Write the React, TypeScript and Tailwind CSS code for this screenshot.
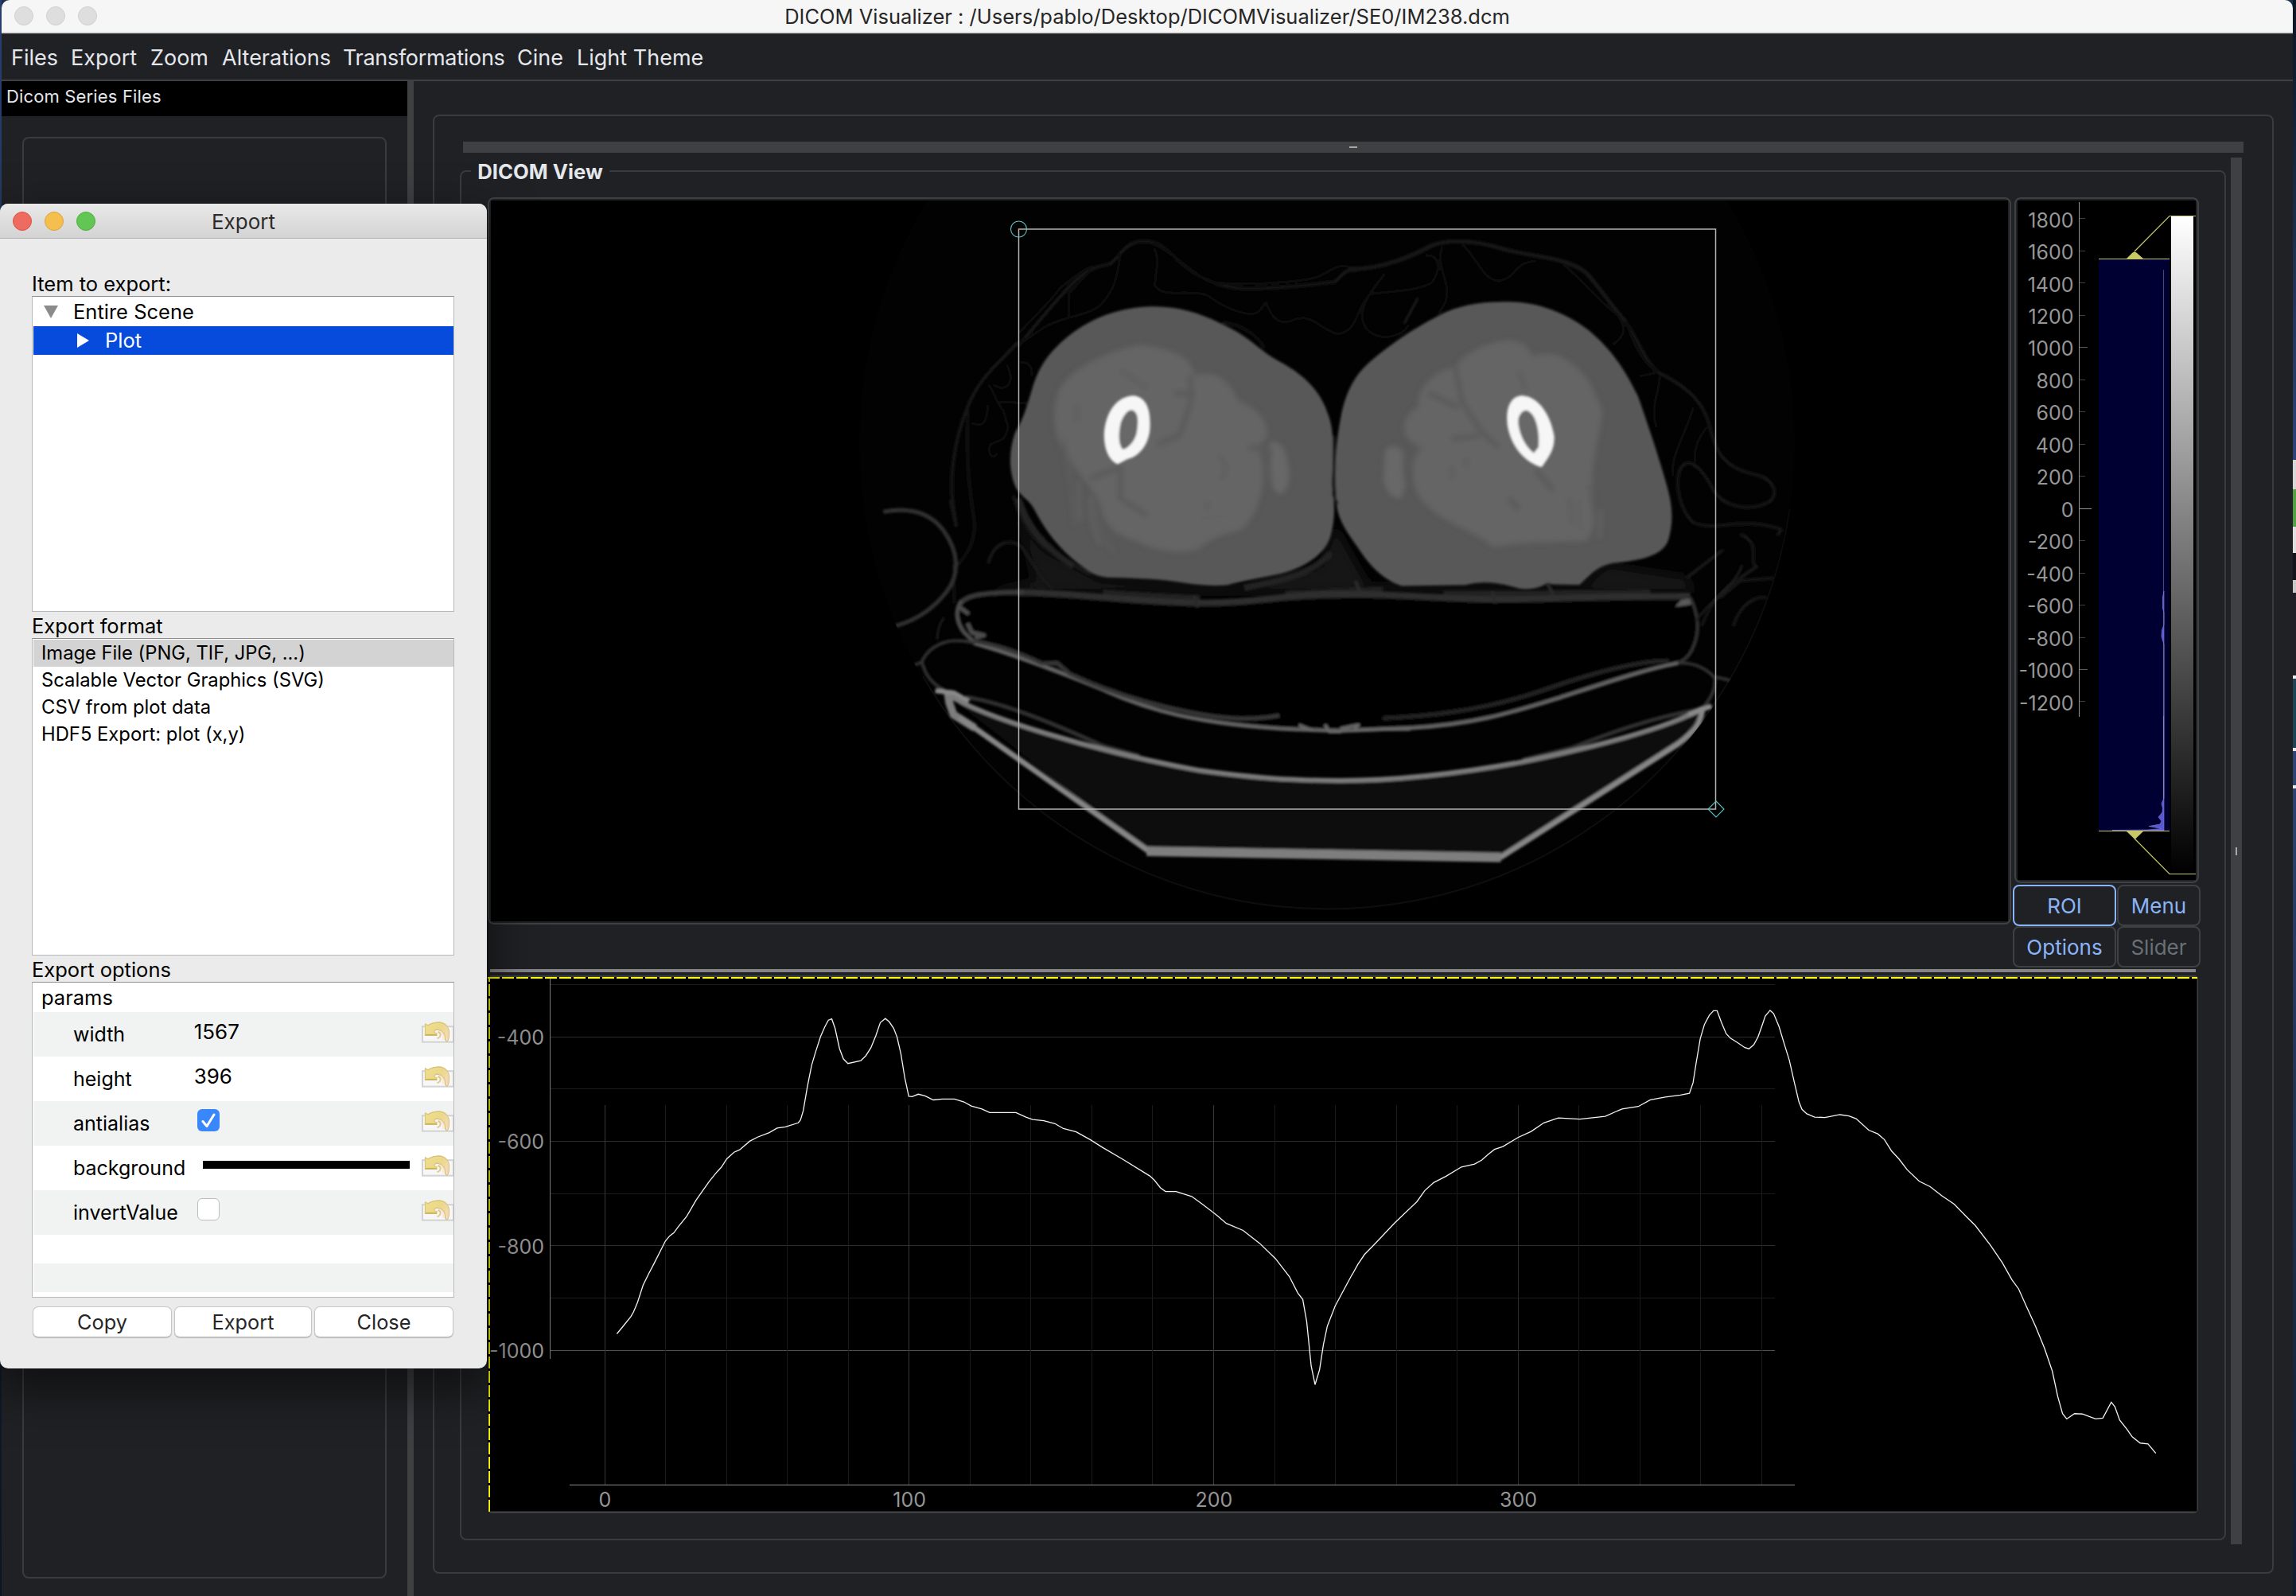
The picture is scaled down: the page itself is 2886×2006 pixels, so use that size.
import React from "react";

/* ---------- CT slice ---------- */

const LEFT_THIGH =
  "M870,435 C980,432 1060,480 1130,525 C1180,560 1200,592 1250,625 C1320,668 1375,725 1397,805 C1422,870 1415,960 1412,1060 C1420,1130 1422,1180 1408,1240 C1395,1300 1340,1350 1260,1375 C1190,1392 1140,1402 1100,1415 C1040,1420 1000,1412 940,1402 C880,1392 800,1390 740,1388 C700,1384 680,1362 655,1340 C600,1290 560,1230 530,1165 C510,1110 485,1110 467,1070 C445,1010 448,940 465,880 C490,830 500,790 515,730 C530,670 550,620 595,570 C665,490 760,438 870,435Z";
const RIGHT_THIGH =
  "M600,418 C700,415 790,465 850,520 C930,600 965,680 995,750 C1025,850 1065,990 1085,1080 C1100,1150 1100,1200 1085,1260 C1065,1315 1000,1328 920,1338 C870,1350 850,1385 820,1415 L720,1412 Q670,1442 620,1420 Q540,1395 480,1415 L290,1418 C230,1395 190,1340 160,1285 C130,1235 100,1190 95,1130 C85,1000 95,900 110,810 C125,730 150,680 185,640 C250,570 340,500 420,455 C480,425 540,418 600,418Z";
const LEFT_MUSCLE =
  "M840,570 C900,580 1000,600 1000,680 C1060,650 1110,700 1130,765 C1190,790 1220,840 1220,890 L1190,930 C1220,1000 1210,1150 1140,1220 C1080,1240 1050,1250 1010,1290 C950,1310 870,1290 830,1260 C760,1240 730,1200 720,1130 C690,1060 640,1010 620,950 C580,900 570,800 600,720 C640,650 740,590 840,570Z";
const RIGHT_MUSCLE =
  "M600,555 C650,550 670,580 680,610 C740,580 800,620 850,700 L890,800 C880,900 860,950 860,1050 C860,1150 880,1200 840,1260 L680,1265 L560,1280 C520,1230 420,1200 370,1140 C310,1080 310,980 350,930 C280,900 280,830 340,785 C330,720 400,650 450,650 C470,600 550,560 600,555Z";

function Stroke({ d, c, w }: { d: string; c: string; w: number }) {
  return <path d={d} fill="none" stroke={c} strokeWidth={w} strokeLinejoin="round" vectorEffect="non-scaling-stroke" />;
}

function CtSlice() {
  return (
    <svg viewBox="617 252 1907 906" className="block h-[906px] w-[1907px]">
      <defs>
        <clipPath id="fov">
          <circle cx="1668" cy="557" r="588" />
        </clipPath>
        <filter id="soft" x="-5%" y="-5%" width="110%" height="110%">
          <feGaussianBlur stdDeviation="1.6" />
        </filter>
        <filter id="softer" x="-10%" y="-10%" width="120%" height="120%">
          <feGaussianBlur stdDeviation="3" />
        </filter>
        <filter id="haze" x="-10%" y="-20%" width="120%" height="140%">
          <feGaussianBlur stdDeviation="7" />
        </filter>
      </defs>
      <rect x="617" y="252" width="1907" height="906" fill="#000" />
      <g clipPath="url(#fov)">
        <circle cx="1668" cy="557" r="588" fill="#020202" />
        <path d="M1160,850 A588,588 0 0 0 2250,640" fill="none" stroke="#0e0e0e" strokeWidth="2" />

        {/* haze of cloth and tissue just above the table */}
        <g filter="url(#haze)">
          <path d="M1278,640 L1310,690 L1380,728 L1560,738 L1660,712 L1678,660 L1720,735 L1990,738 L2020,710 L2120,725 L2130,745 L1230,745 L1300,730 Z" fill="#171717" />
        </g>

        <g filter="url(#soft)">
          {/* blanket contours, left half */}
          <g transform="translate(1080 230) scale(.42092 .35714)">
            <Stroke c="#131313" w={4} d="M475,575 C540,480 590,410 640,350 C690,295 720,292 750,285 C790,240 800,205 850,205 C900,205 920,240 960,280 C1010,330 1060,365 1150,372 C1250,372 1340,360 1420,348 L1455,310 L1490,305" />
            <Stroke c="#101010" w={3} d="M475,530 C530,460 570,420 600,370 C650,320 680,300 700,292 M880,215 C930,240 980,300 1040,345 C1120,365 1320,350 1370,330 C1410,310 1420,290 1450,292 L1490,302 L1568,292" />
            <Stroke c="#0e0e0e" w={3} d="M780,250 C770,340 760,380 720,430 C680,470 600,470 550,510 L475,570 M690,310 L625,390 L627,465 M880,230 C900,270 885,300 883,360 C910,410 980,370 1040,395 C1090,440 1170,480 1195,450 L1215,420 C1230,470 1250,500 1290,485 C1350,450 1380,520 1430,532 C1490,520 1480,450 1520,400 L1568,320" />
            <Stroke c="#171717" w={4} d="M475,560 C400,650 350,700 320,800 C280,920 270,1050 280,1130 L290,1210" />
            <Stroke c="#121212" w={3} d="M325,800 C318,1000 330,1080 345,1200 C345,1280 310,1320 295,1345 M283,1340 L283,1480 M1085,490 C1150,500 1190,540 1210,580" />
            <Stroke c="#101010" w={3} d="M385,780 C380,850 370,860 335,845 M385,710 C410,740 400,760 430,800 L445,860 C430,920 420,900 392,920 C380,950 400,980 412,950 M415,770 L500,775 M440,640 C470,700 440,740 400,710 M480,630 Q520,630 515,680" />
            <Stroke c="#303030" w={5} d="M72,1157 C150,1140 210,1160 250,1220 C300,1300 300,1380 260,1440 C220,1500 170,1540 105,1560" />
            <Stroke c="#161616" w={4} d="M272,1115 L290,1210 M385,1340 C400,1270 440,1250 480,1275 C520,1330 540,1400 580,1430 M460,1100 C480,1180 520,1270 580,1300 L690,1380" />
            <Stroke c="#202020" w={8} d="M475,1110 C500,1200 540,1270 640,1350 M1150,1425 C1260,1400 1350,1380 1410,1300" />
          </g>
          {/* blanket contours, right half */}
          <g transform="translate(1640 230) scale(.42092 .35714)">
            <Stroke c="#161616" w={5} d="M130,305 C250,300 330,250 380,220 C440,195 520,205 600,235 C680,260 780,260 840,315 C890,380 920,440 960,490" />
            <Stroke c="#131313" w={4} d="M960,490 C1000,560 1010,620 1060,670 C1130,710 1190,760 1210,860 C1230,950 1250,1000 1340,1025 C1390,1035 1420,1080 1390,1120 C1330,1160 1250,1140 1220,1080 C1190,1010 1150,960 1125,1000 C1100,1050 1120,1150 1160,1195 C1230,1230 1300,1170 1425,1220" />
            <Stroke c="#0f0f0f" w={3} d="M240,320 C180,400 150,470 190,520 C230,560 290,540 310,500 M200,390 C260,380 340,380 380,350 C410,300 400,250 360,255 M410,225 C390,300 440,350 420,420 L400,460 M470,215 C520,270 530,340 580,345 C640,330 620,280 690,275 M770,285 C840,350 880,420 930,460 C970,520 950,540 920,570 M960,490 C980,560 1000,620 1050,665" />
            <Stroke c="#1a1a1a" w={3} d="M338,405 L297,495" />
            <Stroke c="#101010" w={3} d="M1060,680 C1060,740 1030,780 1050,860 M1160,790 C1140,880 1090,960 1100,1030 M1200,860 Q1160,920 1165,980 M1000,680 L1050,668" />
            <Stroke c="#131313" w={4} d="M1425,1220 L1410,1240 M1300,1235 C1370,1270 1320,1330 1350,1350 C1260,1420 1220,1450 1185,1560 M1140,1390 L1250,1290 M1240,1460 L1300,1400 L1400,1390 M1280,1560 C1300,1480 1350,1450 1380,1460" />
          </g>

          {/* thighs */}
          <g transform="translate(1080 230) scale(.42092 .35714)">
            <path d={LEFT_THIGH} fill="#585858" />
          </g>
          <g transform="translate(1640 230) scale(.42092 .35714)">
            <path d={RIGHT_THIGH} fill="#585858" />
            <path d="M88,890 L86,1100 L98,1130" fill="none" stroke="#121212" strokeWidth="8" />
          </g>
        </g>

        {/* muscle groups */}
        <g filter="url(#softer)">
          <g transform="translate(1080 230) scale(.42092 .35714)">
            <path d={LEFT_MUSCLE} fill="#656565" />
            <path d="M1225,915 Q1250,900 1270,940 Q1295,1030 1275,1080 Q1250,1110 1235,1070Z" fill="#686868" />
            <Stroke c="#5a5a5a" w={6} d="M985,680 C1000,740 990,790 955,890 L890,920 M940,740 L1000,745 M690,1040 L780,1000 L780,1110 L860,1170 M1160,930 L1225,935 L1222,1060" />
            <Stroke c="#5d5d5d" w={4} d="M610,900 C630,1020 640,1120 645,1200 M700,1110 C710,1200 730,1250 760,1300 M1075,960 Q1110,1010 1080,1040 M1040,1120 L1040,1150 M780,660 L860,720 M650,780 L650,840" />
            <Stroke c="#636363" w={4} d="M655,1050 L660,1190 M690,1100 C690,1180 700,1230 720,1270 M1020,1180 L1100,1170" />
          </g>
          <g transform="translate(1640 230) scale(.42092 .35714)">
            <path d={RIGHT_MUSCLE} fill="#656565" />
            <path d="M240,940 Q265,910 295,945 Q290,1010 300,1060 L290,1110 Q250,1110 235,1050Z" fill="#686868" />
            <Stroke c="#5a5a5a" w={6} d="M450,650 L470,770 L530,880 L580,930 M370,740 L460,790 M340,930 L310,1000 M690,1010 L740,1080 M520,890 L440,900 M610,1110 L640,1150" />
            <Stroke c="#5d5d5d" w={4} d="M640,660 L660,730 M850,1060 L865,1180 M790,1110 L800,1200 M440,1000 L440,1040 M480,970 L485,1000" />
            <Stroke c="#636363" w={4} d="M885,1150 L880,1250 M820,1120 L825,1220" />
          </g>
        </g>

        {/* femurs */}
        <g filter="url(#soft)">
          <g transform="translate(1080 230) scale(.42092 .35714)">
            <path d="M820,748 C860,755 872,800 868,870 C862,930 830,965 800,972 L772,990 C740,975 728,920 732,870 C740,800 770,750 820,748Z" fill="#f6f6f6" />
            <path d="M812,799 C832,802 835,830 830,870 C826,910 800,937 787,937 C772,920 775,870 782,840 Q795,802 812,799Z" fill="#686868" />
          </g>
          <g transform="translate(1640 230) scale(.42092 .35714)">
            <path d="M648,748 C700,750 735,820 745,890 C748,940 725,970 708,1000 C660,985 615,930 605,850 C600,790 615,750 648,748Z" fill="#f6f6f6" />
            <path d="M662,800 C690,810 702,870 698,930 L684,950 C650,920 635,860 638,830 Q645,800 662,800Z" fill="#686868" />
          </g>
        </g>

        {/* cushions and table */}
        <g filter="url(#soft)">
          <g transform="translate(1080 680) scale(.76531 .33333)">
            <path d="M165,225 C175,200 210,192 260,192 C350,192 430,225 550,232 C640,235 680,210 760,204 L820,203 C900,208 980,222 1060,222 C1150,218 1250,212 1365,212 C1380,300 1382,420 1340,462 C1200,540 1050,700 910,705 L720,710 C500,690 350,500 190,385 C158,320 158,260 165,225Z" fill="#050505" />
            <Stroke c="#202020" w={12} d="M400,200 C470,215 500,215 560,222 M700,205 L860,190 M960,205 L1100,205 L1300,200" />
            <Stroke c="#2f2f2f" w={8} d="M260,193 C350,195 430,225 550,233 C640,235 680,210 760,201 L820,200 C900,203 980,220 1060,220 C1150,216 1250,208 1365,208" />
            <Stroke c="#383838" w={6} d="M165,238 C175,200 210,193 270,192" />
            <Stroke c="#2c2c2c" w={4} d="M550,205 L556,250 M815,150 L822,190 M1040,190 L1045,235 M1130,160 L1140,200" />
            <Stroke c="#4c4c4c" w={5} d="M168,225 C156,260 160,310 172,345 L190,385 M165,250 L180,275 M178,310 L185,345 L205,355 L190,365" />
            <path d="M1340,248 L1350,222 L1368,215 L1366,240Z" fill="#5a5a5a" />
            <Stroke c="#303030" w={4} d="M1365,212 C1378,270 1382,340 1370,400 C1365,430 1355,455 1340,462" />

            <Stroke c="#626262" w={5} d="M188,385 C250,425 330,495 400,560 C470,635 560,695 720,711 L790,716 L910,705 C1020,690 1080,640 1150,592 C1220,540 1290,485 1345,461" />
            <Stroke c="#363636" w={5} d="M190,378 C240,400 270,430 300,462 L325,460 L345,500 C400,560 470,612 540,645 C600,672 640,678 690,658" />
            <Stroke c="#242424" w={5} d="M860,668 C960,660 1050,620 1120,565 C1200,500 1280,450 1330,452" />
            <Stroke c="#666" w={4} d="M722,694 L745,715 M765,692 L772,720 L792,720 M790,708 L820,694 L812,715 L860,710 L905,710" />

            <Stroke c="#303030" w={4} d="M190,385 C150,362 130,385 115,415 C105,440 100,460 105,470 C110,510 120,540 140,562 M90,468 L105,455" />
            <Stroke c="#1c1c1c" w={3} d="M128,370 Q130,310 140,290 M1375,300 C1395,230 1440,170 1450,90" />
            <Stroke c="#323232" w={4} d="M1345,461 C1375,455 1395,490 1405,515 C1407,560 1397,600 1385,628 M1405,512 L1430,525" />

            <path d="M160,610 C300,740 450,830 560,865 C650,890 700,900 790,902 C900,902 1000,870 1090,830 C1200,780 1330,700 1385,640 L1350,760 L1050,1195 L475,1172Z" fill="#0c0c0c" />
            <Stroke c="#303030" w={5} d="M175,588 C240,610 330,700 400,772 L460,810 M1385,632 C1300,665 1220,735 1170,780 L1090,825" />
            <Stroke c="#7a7a7a" w={6} d="M145,578 C200,660 380,790 560,865 C650,893 700,902 790,903 C900,903 1000,870 1090,832 C1200,780 1330,705 1385,630" />
            <Stroke c="#7c7c7c" w={10} d="M145,565 L148,610 L155,655 L190,705" />
            <Stroke c="#868686" w={7} d="M165,665 L477,1172" />
            <Stroke c="#868686" w={7} d="M1385,625 C1385,680 1372,720 1345,765 L1052,1195" />
            <Stroke c="#8a8a8a" w={6} d="M1362,655 L1400,622 M125,565 L155,572 L180,605" />
            <Stroke c="#7e7e7e" w={12} d="M472,1170 L1054,1193" />
          </g>
        </g>
      </g>

      {/* region of interest */}
      <rect x="1280.5" y="288" width="876" height="729" fill="none" stroke="#b4b4b4" strokeWidth="1.5" />
      <circle cx="1280.5" cy="288" r="10" fill="none" stroke="#62c4c4" strokeWidth="1.1" />
      <path d="M2157,1007 L2167,1017 L2157,1027 L2147,1017Z" fill="none" stroke="#62c4c4" strokeWidth="1.1" />
    </svg>
  );
}

/* ---------- histogram ---------- */

const LEVELS = [1800, 1600, 1400, 1200, 1000, 800, 600, 400, 200, 0, -200, -400, -600, -800, -1000, -1200];

function Histogram() {
  return (
    <svg viewBox="2536 252 224 854" className="block h-[854px] w-[224px] font-['Inter']">
      <defs>
        <linearGradient id="gray" x1="0" y1="0" x2="0" y2="1">
          <stop offset="0" stopColor="#fff" />
          <stop offset="0.45" stopColor="#858585" />
          <stop offset="0.85" stopColor="#242424" />
          <stop offset="1" stopColor="#000" />
        </linearGradient>
      </defs>
      <rect x="2536" y="252" width="224" height="854" fill="#000" />
      <line x1="2613.5" x2="2613.5" y1="254" y2="901" stroke="#969696" strokeWidth="1" />
      {LEVELS.map((v, i) => {
        const y = 275.4 + i * 40.47;
        const len = v === 0 ? 15 : v % 1000 === 0 ? 10 : 7;
        return (
          <g key={v}>
            <text x="2606.5" y={y + 10.2} textAnchor="end" fontSize="25" fill="#969696">
              {v}
            </text>
            <line x1="2614" x2={2614 + len} y1={Math.round(y) - 0.5} y2={Math.round(y) - 0.5} stroke={v === 0 ? "#969696" : v % 1000 === 0 ? "#5a5a5a" : "#404040"} />
          </g>
        );
      })}
      <rect x="2638" y="325" width="89" height="719" fill="#000032" />
      <line x1="2719.5" x2="2719.5" y1="339" y2="900" stroke="#45457a" />
      <line x1="2719.5" x2="2719.5" y1="900" y2="1044" stroke="#8484c8" />
      <path
        d="M2720,743 L2718.500,750 L2718.500,765 L2720,770 L2720,785 L2717.5,792 L2717,800 L2720,810 L2720,1003 L2717,1010 L2718.5,1016 L2718,1021 L2713,1027 L2717,1032 L2715,1036 L2701,1038.5 L2717,1041.5 L2700,1043 L2655,1043.5 L2720,1044Z"
        fill="#5656d6"
        stroke="#8484c8"
        strokeWidth="0.6"
      />
      <g fill="none" stroke="#c8c864" strokeWidth="1.2">
        <path d="M2638,325.5 H2727" />
        <path d="M2683,316 L2727,271.5 H2760" />
        <path d="M2638,1044.5 H2727" />
        <path d="M2683,1054 L2727,1098.5 H2760" />
      </g>
      <path d="M2673,325 L2680,318 Q2683,315 2686,318 L2694,325Z" fill="#c8c864" />
      <path d="M2673,1045 H2694 L2683.5,1055Z" fill="#c8c864" />
      <rect x="2729" y="272" width="28" height="826" fill="url(#gray)" />
    </svg>
  );
}

/* ---------- profile plot ---------- */

const CURVE_LEFT =
  "250,927 262,907 275,885 280,873 287,850 297,808 307,780 317,754 337,700 345,687 352,680 360,665 375,640 392,600 415,555 430,530 437,520 447,499 460,483 470,477 488,456 502,446 523,435 537,424 552,421 575,411 579,404 584,381 591,325 599,270 606,238 615,200 623,175 629,160 635,157 641,180 649,230 656,255 664,266 687,259 696,247 705,228 714,198 722,166 731,156 738,164 746,180 752,201 759,243 766,302 773,346 779,347 790,341 802,345 817,355 833,353 855,353 872,360 885,370 904,377 918,386 965,386 983,397 995,403 1015,406 1035,413 1050,425 1073,433 1098,452 1120,471 1155,499 1205,541 1213,551 1224,570 1233,579 1252,579 1280,591 1300,611 1325,637 1342,657 1372,674 1402,706 1430,743 1455,787 1470,827 1479,843 1486,897 1494,1005 1501,1051 1509,1015 1516,953 1523,908 1537,859 1568,780";
const CURVE_RIGHT =
  "0,781 9,757 20,733 34,712 70,656 107,604 120,577 135,557 155,542 181,519 203,512 215,502 225,489 236,476 250,469 275,447 297,432 318,411 342,399 378,402 420,395 448,377 475,371 495,355 520,348 545,343 560,339 566,313 571,266 578,205 585,170 593,148 600,137 606,137 613,165 621,193 628,204 640,215 652,227 659,230 667,220 674,201 680,176 686,150 694,136 700,144 709,176 718,220 726,258 734,310 742,360 747,378 755,389 768,397 785,398 810,391 825,394 837,401 858,429 873,438 884,452 896,480 908,499 922,526 942,554 960,567 980,590 1000,610 1020,640 1035,662 1060,710 1080,753 1096,795 1107,817 1120,860 1135,908 1150,962 1163,1018 1172,1080 1180,1122 1187,1135 1200,1122 1213,1123 1235,1135 1247,1133 1261,1094 1267,1105 1275,1138 1287,1160 1296,1179 1309,1194 1322,1196 1335,1219";

const GRID_Y = [1237.5, 1303.5, 1368.5, 1434.5, 1500.5, 1565.5, 1631.5, 1697.5];

function ProfilePlot() {
  return (
    <svg viewBox="613 1226 2150 676" className="block h-[676px] w-[2150px] font-['Inter']">
      <rect x="613" y="1226" width="2150" height="676" rx="5" fill="#3f4042" />
      <rect x="613" y="1228" width="2148.5" height="671.5" fill="#000" />
      {GRID_Y.map((y, i) => (
        <line key={y} x1="692" x2="2231" y1={y} y2={y} stroke={i === 7 ? "#505050" : i % 2 ? "#2c2c2c" : "#1c1c1c"} />
      ))}
      {Array.from({ length: 20 }, (_, i) => {
        const x = Math.round(759.5 + i * 76.55) + 0.5;
        return <line key={x} x1={x} x2={x} y1="1389" y2="1867" stroke={i % 5 ? "#1a1a1a" : i === 15 ? "#2a2a2a" : "#383838"} />;
      })}
      <line x1="691.5" x2="691.5" y1="1229" y2="1708" stroke="#7a7a7a" />
      <line x1="716" x2="2256" y1="1866.5" y2="1866.5" stroke="#8c8c8c" />
      <g fontSize="25" fill="#969696">
        {["-400", "-600", "-800", "-1000"].map((t, i) => (
          <text key={t} x="684" y={1313 + i * 131.4} textAnchor="end">
            {t}
          </text>
        ))}
        {["0", "100", "200", "300"].map((t, i) => (
          <text key={t} x={760.5 + i * 382.7} y="1894" textAnchor="middle">
            {t}
          </text>
        ))}
      </g>
      <g fill="none" stroke="#f4f4f4" strokeWidth="1.3">
        <g transform="translate(600 1200) scale(.70153 .51403)">
          <polyline vectorEffect="non-scaling-stroke" points={CURVE_LEFT} />
        </g>
        <g transform="translate(1700 1200) scale(.75638 .51403)">
          <polyline vectorEffect="non-scaling-stroke" points={CURVE_RIGHT} />
        </g>
      </g>
      <line x1="613" x2="2762" y1="1229" y2="1229" stroke="#ffff00" strokeWidth="2" strokeDasharray="15 3" />
      <line x1="615" x2="615" y1="1900" y2="1228" stroke="#f0f000" strokeWidth="2" strokeDasharray="15 3" />
    </svg>
  );
}

/* ---------- export dialog ---------- */

function ResetButton() {
  return (
    <svg viewBox="530 1282 41 32" className="h-[32px] w-[41px]">
      <defs>
        <linearGradient id="gold" x1="0" y1="0" x2="1" y2="0.8">
          <stop offset="0" stopColor="#efe08a" />
          <stop offset="0.55" stopColor="#ecd78c" />
          <stop offset="1" stopColor="#f3dcc0" />
        </linearGradient>
      </defs>
      <rect x="531" y="1290" width="40" height="20" fill="#f7f7f7" stroke="#d2d2d2" strokeWidth="2" />
      <path d="M551,1297 C556,1298 558,1302 556,1306 L561,1308 L562,1296 L554,1292Z" fill="#f8e9da" />
      <path
        d="M534.5,1286.500 L538,1288.500 C543,1285.500 548,1284.500 553,1284.500 C561,1285.500 565.500,1291 565.500,1298 C565.500,1303 565,1306.500 563.5,1309 C562,1309.500 560.500,1308.500 560.5,1306.500 C560.500,1300 557,1295 551,1294 C547,1294 545.500,1296 547,1298 L549.5,1298.500 L549.5,1301.500 L534.5,1301.500Z"
        fill="url(#gold)"
        stroke="#d8c274"
        strokeWidth="1.1"
        strokeLinejoin="round"
      />
      <path d="M551,1297 C555.500,1298.500 555.500,1303.500 550,1305.500" fill="none" stroke="#e0cb8c" strokeWidth="2" />
      <path d="M535,1300.800 H549.5" stroke="#cbb25a" strokeWidth="1.6" />
    </svg>
  );
}

function OptionRow({ label, shaded, children }: { label: string; shaded?: boolean; children: React.ReactNode }) {
  return (
    <div className={`flex h-[56px] items-center pl-[50px] ${shaded ? "bg-[#f1f3f2]" : "bg-white"}`}>
      <span className="w-[151px] pt-[2px] text-[25px]">{label}</span>
      <div className="flex h-full w-[288px] items-center pb-[7px]">{children}</div>
      <div className="mb-[5px] flex w-[40px] overflow-hidden">
        <ResetButton />
      </div>
    </div>
  );
}

function DialogButton({ label, w }: { label: string; w: string }) {
  return (
    <button className={`flex h-[39px] items-center justify-center rounded-[7px] border border-[#c6c6c6] border-b-[#b0b0b0] bg-white pt-px text-[25.3px] text-[#262626] shadow-[0_1px_1px_rgba(0,0,0,0.15)] ${w}`}>
      {label}
    </button>
  );
}

function ExportDialog() {
  return (
    <div className="absolute left-0 top-[256px] flex h-[1464px] w-[612px] flex-col rounded-[10px] bg-[#ebebeb] text-black shadow-[0_24px_60px_6px_rgba(0,0,0,0.5),0_0_2px_rgba(0,0,0,0.8)]">
      <div className="grid h-[44px] grid-cols-[1fr_auto_1fr] items-center rounded-t-[10px] border-b border-[#b1b1b1] bg-linear-to-b from-[#e9e9e9] to-[#d3d3d3]">
        <div className="flex gap-4 pl-4">
          <span className="size-6 rounded-full border border-[#df4f45] bg-[#ed6b5f]" />
          <span className="size-6 rounded-full border border-[#dfa33c] bg-[#f5bf4f]" />
          <span className="size-6 rounded-full border border-[#4fae3c] bg-[#62c655]" />
        </div>
        <span className="pt-[2px] text-[26px] leading-[38px] text-[#2c2c2c]">Export</span>
      </div>

      <div className="flex flex-col px-[40px]">
        <div className="mt-[40px] flex h-[32px] items-center pt-[3px] text-[25.5px]">Item to export:</div>
        <div className="flex h-[397px] w-[531px] flex-col border border-[#b9b9b9] border-t-[#8e8e8e] bg-white p-px pr-0 text-[25.5px]">
          <div className="flex h-[36px] items-center pl-[13px]">
            <svg viewBox="0 0 18 16" className="h-4 w-[18px]">
              <path d="M0,0 H18 L9,16Z" fill="#8b8b8b" />
            </svg>
            <span className="pl-[19px]">Entire Scene</span>
          </div>
          <div className="flex h-[36px] items-center bg-[#064bdb] pl-[55px] text-white">
            <svg viewBox="0 0 15 18" className="h-[18px] w-[15px]">
              <path d="M0,0 L15,9 L0,18Z" fill="#fff" />
            </svg>
            <span className="pl-[20px]">Plot</span>
          </div>
        </div>

        <div className="flex h-[33px] items-center pt-[4px] text-[25.5px]">Export format</div>
        <div className="flex h-[399px] w-[531px] flex-col border border-[#b9b9b9] border-t-[#8e8e8e] bg-white p-px pr-0 text-[23.8px]">
          <div className="flex h-[34px] items-center bg-[#d3d3d3] pl-[10px] tracking-[-0.03px]">Image File (PNG, TIF, JPG, ...)</div>
          <div className="flex h-[34px] items-center pl-[10px]">Scalable Vector Graphics (SVG)</div>
          <div className="flex h-[34px] items-center pl-[10px]">CSV from plot data</div>
          <div className="flex h-[34px] items-center pl-[10px]">HDF5 Export: plot (x,y)</div>
        </div>

        <div className="flex h-[33px] items-center pt-[4px] text-[25.5px]">Export options</div>
        <div className="flex h-[397px] w-[531px] flex-col border border-[#b9b9b9] border-t-[#8e8e8e] bg-white pl-px">
          <div className="flex h-[37px] items-center pl-[10px] pt-px text-[25.5px]">params</div>
          <OptionRow label="width" shaded>
            <span className="pl-px text-[26px]">1567</span>
          </OptionRow>
          <OptionRow label="height">
            <span className="pl-px text-[26px]">396</span>
          </OptionRow>
          <OptionRow label="antialias" shaded>
            <span className="mb-[-6px] ml-[5px] mt-[-7px] flex size-[28px] items-center justify-center rounded-[6px] bg-[#3a86fb]">
              <svg viewBox="0 0 28 28" className="size-7">
                <path d="M7,15.500 L12,21.500 L21,7" fill="none" stroke="#fff" strokeWidth="3" strokeLinecap="round" strokeLinejoin="round" />
              </svg>
            </span>
          </OptionRow>
          <OptionRow label="background">
            <span className="mb-[1px] ml-[12px] h-[10px] w-[260px] bg-black" />
          </OptionRow>
          <OptionRow label="invertValue" shaded>
            <span className="mb-[-6px] ml-[5px] mt-[-7px] size-[28px] rounded-[6px] border border-[#bdbdbd] bg-white" />
          </OptionRow>
          <div className="h-[36px]" />
          <div className="h-[36px] bg-[#f1f3f2]" />
        </div>

        <div className="ml-px mt-[11px] flex w-[529px] justify-between">
          <DialogButton label="Copy" w="w-[175px]" />
          <DialogButton label="Export" w="w-[173px]" />
          <DialogButton label="Close" w="w-[175px]" />
        </div>
      </div>
    </div>
  );
}

/* ---------- main window ---------- */

const MENU = [
  ["Files", "w-[75px]"],
  ["Export", "w-[100px]"],
  ["Zoom", "w-[90px]"],
  ["Alterations", "w-[152px]"],
  ["Transformations", "w-[219px] tracking-[-0.3px]"],
  ["Cine", "w-[75px]"],
  ["Light Theme", "w-[170px]"],
];

function ToolButton({ label, className }: { label: string; className: string }) {
  return (
    <button className={`flex h-[52px] items-center justify-center rounded-[8px] border-2 text-[26px] ${className}`}>{label}</button>
  );
}

export default function App() {
  return (
    <div className="relative flex h-[2006px] w-[2886px] overflow-hidden whitespace-nowrap bg-[#1e3050] font-['Inter',sans-serif]">
      <div className="h-full w-[2px] bg-linear-to-b from-[#27406e] to-[#0c1420]" />

      <div className="flex w-[2880px] flex-col rounded-t-[10px] bg-[#202124]">
        <div className="grid h-[42px] grid-cols-[1fr_auto_1fr] items-center rounded-t-[10px] border-b-2 border-[#dcdcdc] bg-[#f6f6f6]">
          <div className="flex gap-4 pl-4">
            <span className="size-6 rounded-full border border-[#d0d0d0] bg-[#dedede]" />
            <span className="size-6 rounded-full border border-[#d0d0d0] bg-[#dedede]" />
            <span className="size-6 rounded-full border border-[#d0d0d0] bg-[#dedede]" />
          </div>
          <span className="pt-[2px] text-[25.5px] leading-[38px] text-[#262626]">
            DICOM Visualizer : /Users/pablo/Desktop/DICOMVisualizer/SE0/IM238.dcm
          </span>
        </div>

        <div className="flex h-[60px] items-center border-b-2 border-[#3f4042] pl-[12px] pt-[4px] text-[27px] text-[#e4e7eb]">
          {MENU.map(([label, w]) => (
            <span key={label} className={w}>
              {label}
            </span>
          ))}
        </div>

        <div className="flex h-[1904px]">
          <div className="flex w-[510px] flex-col">
            <div className="flex h-[44px] items-center bg-black pb-[5px] pl-[6px] text-[22px] tracking-[0.15px] text-[#e4e7eb]">
              Dicom Series Files
            </div>
            <div className="ml-[26px] mt-[26px] h-[1812px] w-[458px] rounded-[8px] border-2 border-[#3a3b3e]" />
          </div>
          <div className="w-[8px] bg-[#3f4042]" />

          <div className="ml-[24px] mt-[42px] flex h-[1834px] w-[2314px] flex-col rounded-[8px] border-2 border-[#3a3b3e]">
            <div className="ml-[36px] mt-[32px] flex h-[14px] w-[2238px] shrink-0 items-center justify-center bg-[#3f4042]">
              <span className="h-[2px] w-[10px] bg-[#a8a8a8]" />
            </div>

            <div className="ml-[32px] flex">
              <div className="mt-[22px] flex h-[1722px] w-[2220px] flex-col rounded-[8px] border-2 border-[#3a3b3e]">
                <div className="-mt-[16px] ml-[12px] flex h-[32px] w-[174px] items-center justify-center bg-[#202124] text-[25.700px] font-bold text-[#e4e7eb]">
                  DICOM View
                </div>

                <div className="ml-[33px] mt-[16px] flex h-[970px]">
                  <div className="h-[914px] w-[1915px] rounded-[8px] border-2 border-[#3f4042] p-[2px]">
                    <CtSlice />
                  </div>
                  <div className="ml-[2px] flex w-[237px] flex-col">
                    <div className="ml-[2px] h-[862px] w-[232px] rounded-[8px] border-2 border-[#3f4042] p-[2px]">
                      <Histogram />
                    </div>
                    <div className="mt-[2px] grid grid-cols-[130px_105px] gap-x-px">
                      <ToolButton label="ROI" className="border-[#8ab4f7] text-[#8ab4f7]" />
                      <ToolButton label="Menu" className="border-[#3f4042] text-[#8ab4f7]" />
                      <ToolButton label="Options" className="border-[#3f4042] text-[#8ab4f7]" />
                      <ToolButton label="Slider" className="border-[#3f4042] text-[#697177]" />
                    </div>
                  </div>
                </div>

                <div className="ml-[36px] h-[4px] w-[2144px] shrink-0 bg-[#848488]" />
                <div className="ml-[33px] mt-[4px]">
                  <ProfilePlot />
                </div>
              </div>

              <div className="ml-[6px] mt-[6px] flex h-[1743px] w-[14px] items-center justify-center bg-[#3f4042]">
                <span className="h-[10px] w-[2px] bg-[#a8a8a8]" />
              </div>
            </div>
          </div>
        </div>
      </div>

      {/* sliver of the desktop behind the window */}
      <div className="flex w-[4px] flex-col">
        <div className="h-[578px] bg-linear-to-b from-[#0b1626] to-[#2a4674]" />
        <div className="h-[37px] bg-[#d8d8d8]" />
        <div className="h-[47px] bg-[#55a046]" />
        <div className="h-[33px] bg-[#e0e0e0]" />
        <div className="h-[34px] bg-[#14151c]" />
        <div className="h-[16px] bg-[#c8c8c8]" />
        <div className="h-[104px] bg-[#20202b]" />
        <div className="h-[4px] bg-[#f0f0f0]" />
        <div className="h-[87px] bg-[#1c4456]" />
        <div className="h-[4px] bg-[#e8e8e8]" />
        <div className="h-[43px] bg-[#2c4672]" />
        <div className="h-[4px] bg-[#e8e8e8]" />
        <div className="grow bg-linear-to-b from-[#28436c] to-[#101c30]" />
      </div>

      <ExportDialog />
    </div>
  );
}
